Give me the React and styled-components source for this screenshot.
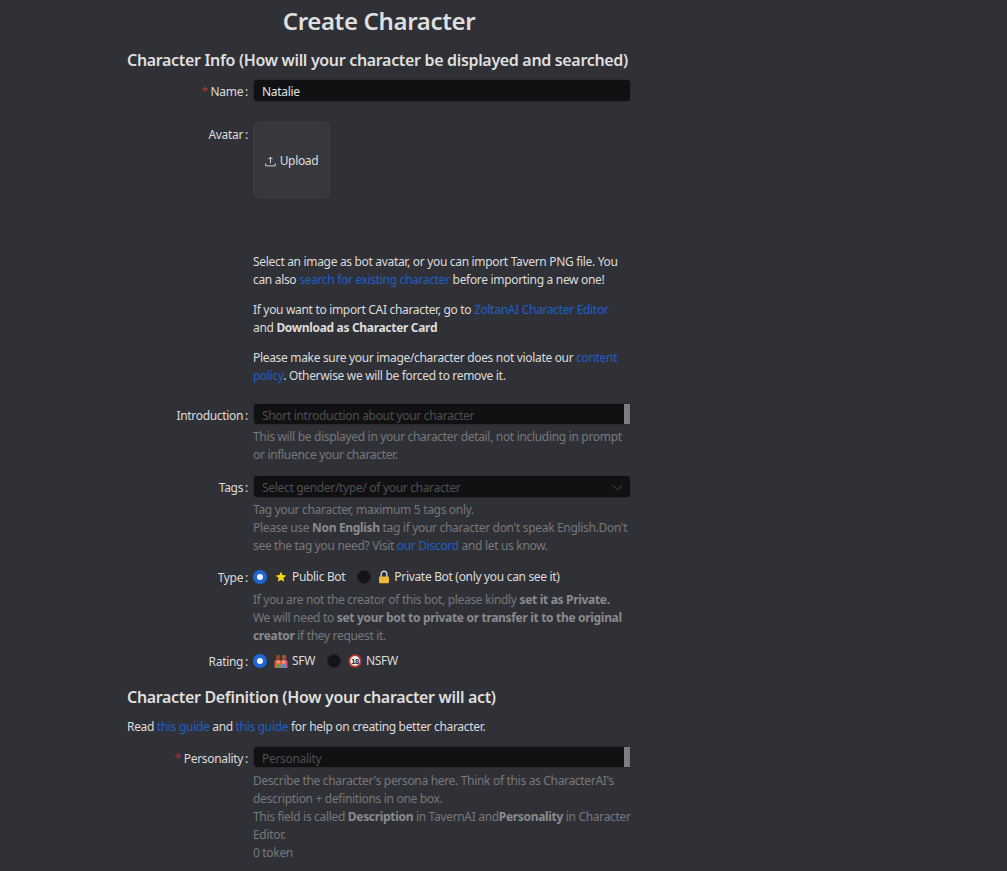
import React from "react";
import styled, { createGlobalStyle } from "styled-components";

const Star = () => (
  <Emoji viewBox="0 0 14 14">
    <path d="M7 1.600l1.600 3.500 3.800.4-2.900 2.500.9 3.800L7 9.900l-3.400 1.900.9-3.800-2.900-2.500 3.800-.4z" fill="#efd31c" stroke="#1d1d1f" strokeWidth="1" paintOrder="stroke" />
  </Emoji>
);

const Lock = () => (
  <Emoji $w={12} viewBox="0 0 12 14">
    <path d="M3.200 7V4a2.800 2.800 0 0 1 5.600 0v3" fill="none" stroke="#d4d4d4" strokeWidth="1.400" />
    <rect x="1" y="6.400" width="10" height="6.800" rx="1" fill="#efb73a" />
  </Emoji>
);

const Family = () => (
  <Emoji viewBox="0 0 14 14">
    <circle cx="4" cy="3" r="2.300" fill="#8a4a24" />
    <circle cx="10" cy="3" r="2.300" fill="#a3582a" />
    <path d="M.6 14V8a2.600 2.600 0 0 1 2.600-2.600h1.600A2.400 2.400 0 0 1 7 7v7z" fill="#e2603c" />
    <path d="M7 14V7a2.400 2.400 0 0 1 2.200-1.600h1.600A2.600 2.600 0 0 1 13.400 8v6z" fill="#e8577a" />
    <circle cx="4.500" cy="8" r="1.500" fill="#e3ab68" />
    <circle cx="9.500" cy="8" r="1.500" fill="#e3ab68" />
    <path d="M2.800 14v-2.400a1.500 1.500 0 0 1 1.500-1.500h.4a1.500 1.500 0 0 1 1.500 1.500V14z" fill="#46a852" />
    <path d="M7.800 14v-2.400a1.500 1.500 0 0 1 1.500-1.500h.4a1.500 1.500 0 0 1 1.500 1.500V14z" fill="#3f95d6" />
  </Emoji>
);

const Adult = () => (
  <Emoji viewBox="0 0 14 14">
    <circle cx="7" cy="7" r="5.800" fill="#efe9e6" stroke="#b8362c" strokeWidth="1.800" />
    <text x="7" y="9.700" textAnchor="middle" fontSize="7.500" fontWeight="700" fontFamily="Liberation Sans, sans-serif" fill="#2b2222">18</text>
  </Emoji>
);

const UploadIcon = () => (
  <svg width="11" height="11" viewBox="0 0 12 12" fill="none" stroke="#e0e0e0" strokeWidth="1">
    <path d="M6 8V1.500M3.800 3.500L6 1.200l2.200 2.300M.8 8v2.800h10.400V8" />
  </svg>
);

const Chevron = () => (
  <ChevronBox width="11" height="7" viewBox="0 0 11 7" fill="none" stroke="#4a4a4e" strokeWidth="1">
    <path d="M.8 1l4.700 5 4.700-5" />
  </ChevronBox>
);

const App = () => {
  return (
    <>
      <GlobalStyle />
      <Page>
        <Title>Create Character</Title>
        <SectionTitle $mt={10}>Character Info (How will your character be displayed and searched)</SectionTitle>

        <Row $mt={7}>
          <Label $required>Name</Label>
          <Control>
            <Field $value>Natalie</Field>
          </Control>
        </Row>

        <Row $mt={20}>
          <Label>Avatar</Label>
          <Control>
            <UploadBox>
              <UploadIcon />
              Upload
            </UploadBox>
            <Para $mt={55}>
              Select an image as bot avatar, or you can import Tavern PNG file. You can also{" "}
              <A>search for existing character</A> before importing a new one!
            </Para>
            <Para $mt={12}>
              If you want to import CAI character, go to <A>ZoltanAI Character Editor</A> and{" "}
              <b>Download as Character Card</b>
            </Para>
            <Para $mt={12}>
              Please make sure your image/character does not violate our <A>content policy</A>. Otherwise we will be forced to remove it.
            </Para>
          </Control>
        </Row>

        <Row $mt={18}>
          <Label>Introduction</Label>
          <Control>
            <Field $scroll>Short introduction about your character</Field>
            <Help $mt={3}>
              This will be displayed in your character detail, not including in prompt or influence your character.
            </Help>
          </Control>
        </Row>

        <Row $mt={11}>
          <Label>Tags</Label>
          <Control>
            <Field>
              Select gender/type/ of your character
              <Chevron />
            </Field>
            <Help $mt={3}>
              Tag your character, maximum 5 tags only.
              <br />
              Please use <b>Non English</b> tag if your character don't speak English.Don't see the tag you need? Visit{" "}
              <A>our Discord</A> and let us know.
            </Help>
          </Control>
        </Row>

        <Row $mt={10}>
          <Label>Type</Label>
          <Control>
            <RadioRow>
              <Radio $on />
              <Option>
                <Star /> Public Bot
              </Option>
              <Radio />
              <Option>
                <Lock /> Private Bot (only you can see it)
              </Option>
            </RadioRow>
            <Help $mt={3}>
              If you are not the creator of this bot, please kindly <b>set it as Private.</b>
              <br />
              We will need to <b>set your bot to private or transfer it to the original creator</b> if they request it.
            </Help>
          </Control>
        </Row>

        <Row $mt={4}>
          <Label>Rating</Label>
          <Control>
            <RadioRow>
              <Radio $on />
              <Option>
                <Family /> SFW
              </Option>
              <Radio />
              <Option>
                <Adult /> NSFW
              </Option>
            </RadioRow>
          </Control>
        </Row>

        <SectionTitle $mt={13}>Character Definition (How your character will act)</SectionTitle>
        <Para $mt={9}>
          Read <A>this guide</A> and <A>this guide</A> for help on creating better character.
        </Para>

        <Row $mt={10}>
          <Label $required>Personality</Label>
          <Control>
            <Field $scroll>Personality</Field>
            <Help $mt={4}>
              Describe the character's persona here. Think of this as CharacterAI's description + definitions in one box.
              <br />
              This field is called <b>Description</b> in TavernAI and<b>Personality</b> in Character Editor.
              <br />0 token
            </Help>
          </Control>
        </Row>
      </Page>
    </>
  );
};

export default App;

const GlobalStyle = createGlobalStyle`
  html, body {
    margin: 0;
    height: 871px;
    overflow: hidden;
    background: #303136;
  }
`;

const Page = styled.div`
  width: 504px;
  margin-left: 127px;
  font-family: "Noto Sans", sans-serif;
  font-size: 12px;
  letter-spacing: -0.32px;
  line-height: 18px;
  color: #dcdcdc;

  b {
    font-weight: 700;
  }
`;

const Title = styled.h1`
  margin: 0;
  padding-top: 4px;
  font-size: 24px;
  line-height: 34px;
  font-weight: 600;
  letter-spacing: -0.35px;
  text-align: center;
  color: #dfdfdf;
`;

const SectionTitle = styled.h2`
  margin: ${(p) => p.$mt}px 0 0;
  font-size: 16px;
  line-height: 24px;
  font-weight: 600;
  letter-spacing: -0.33px;
  color: #dfdfdf;
  white-space: nowrap;
`;

const Row = styled.div`
  display: grid;
  grid-template-columns: 121px 378px;
  column-gap: 5px;
  margin-top: ${(p) => p.$mt}px;
`;

const Label = styled.div`
  height: 23px;
  text-align: right;
  line-height: 25px;
  white-space: nowrap;

  &::before {
    content: ${(p) => (p.$required ? '"* "' : "none")};
    color: #a8343c;
  }

  &::after {
    content: ":";
    margin-left: 2px;
  }
`;

const Control = styled.div`
  min-width: 0;
`;

const Field = styled.div`
  position: relative;
  box-sizing: border-box;
  height: ${(p) => (p.$scroll ? 22 : 23)}px;
  padding: 0 8px;
  line-height: 23px;
  background: #111113;
  border: 1px solid #2a2a2e;
  border-radius: 4px;
  color: ${(p) => (p.$value ? "#e0e0e0" : "#4f4f52")};

  &::after {
    content: ${(p) => (p.$scroll ? '""' : "none")};
    position: absolute;
    top: 0;
    right: 0;
    width: 6px;
    height: 20px;
    background: #7d7d7d;
  }
`;

const ChevronBox = styled.svg`
  position: absolute;
  right: 7px;
  top: 8px;
`;

const UploadBox = styled.div`
  box-sizing: border-box;
  width: 77px;
  height: 76px;
  padding-top: 2px;
  display: flex;
  align-items: center;
  justify-content: center;
  gap: 4px;
  background: #37383d;
  border: 1px solid #3d3e43;
  border-radius: 6px;
  color: #dedede;
`;

const Para = styled.div`
  margin-top: ${(p) => p.$mt}px;
`;

const Help = styled.div`
  margin-top: ${(p) => p.$mt}px;
  color: #77787b;

  b {
    color: #8a8b8e;
  }
`;

const A = styled.a`
  color: #1f5fc8;
`;

const RadioRow = styled.div`
  display: flex;
  align-items: center;
  height: 23px;
`;

const Radio = styled.span`
  box-sizing: border-box;
  width: 14px;
  height: 14px;
  border-radius: 50%;
  background: ${(p) => (p.$on ? "#f4f6fa" : "#141416")};
  border: ${(p) => (p.$on ? "4px solid #1f66d6" : "1px solid #1f1f21")};
  flex: none;
`;

const Option = styled.span`
  display: inline-flex;
  align-items: center;
  gap: 4px;
  padding: 0 12px 0 7px;
  color: #dcdcdc;
  white-space: nowrap;
`;

const Emoji = styled.svg`
  width: ${(p) => p.$w || 14}px;
  height: 14px;
  flex: none;
`;
